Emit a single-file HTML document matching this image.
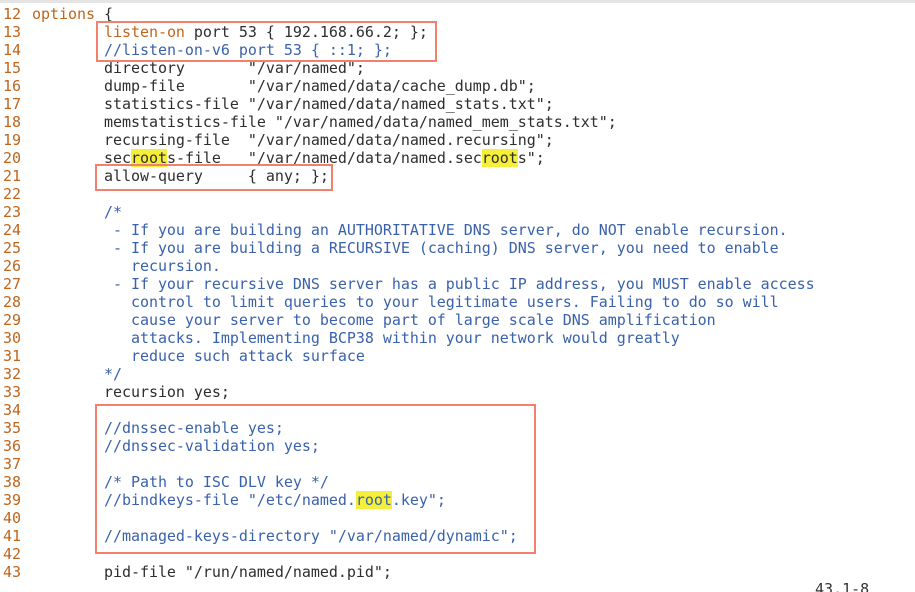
<!DOCTYPE html>
<html><head><meta charset="utf-8"><style>
html,body{margin:0;padding:0;background:#fff;width:915px;height:592px;overflow:hidden;position:relative}
.top{position:absolute;left:0;top:0;width:915px;height:3px;background:#e4e4e4}
pre{margin:0;position:absolute;font-family:"DejaVu Sans Mono","Liberation Mono",monospace;font-size:15px;line-height:18px;color:#2e2e2e;letter-spacing:-0.035px}
#num{left:3px;top:5px;color:#c0651c}
#code{left:32px;top:5px}
.o{color:#c0651c}.c{color:#3a62ab}
.h{background:#f5ef3a}
.box{position:absolute;border:2px solid #f2806c;box-sizing:border-box}
#st{position:absolute;left:815px;top:580px;font-family:"DejaVu Sans Mono",monospace;font-size:15px;color:#333}
</style></head><body>
<div class="top"></div>
<pre id="num">12
13
14
15
16
17
18
19
20
21
22
23
24
25
26
27
28
29
30
31
32
33
34
35
36
37
38
39
40
41
42
43</pre>
<pre id="code"><span class="o">options</span> {
        <span class="o">listen-on</span> port 53 { 192.168.66.2; };
        <span class="c">//listen-on-v6 port 53 { ::1; };</span>
        directory       "/var/named";
        dump-file       "/var/named/data/cache_dump.db";
        statistics-file "/var/named/data/named_stats.txt";
        memstatistics-file "/var/named/data/named_mem_stats.txt";
        recursing-file  "/var/named/data/named.recursing";
        sec<span class="h">root</span>s-file   "/var/named/data/named.sec<span class="h">root</span>s";
        allow-query     { any; };

<span class="c">        /*
         - If you are building an AUTHORITATIVE DNS server, do NOT enable recursion.
         - If you are building a RECURSIVE (caching) DNS server, you need to enable
           recursion.
         - If your recursive DNS server has a public IP address, you MUST enable access
           control to limit queries to your legitimate users. Failing to do so will
           cause your server to become part of large scale DNS amplification
           attacks. Implementing BCP38 within your network would greatly
           reduce such attack surface
        */</span>
        recursion yes;

<span class="c">        //dnssec-enable yes;
        //dnssec-validation yes;

        /* Path to ISC DLV key */
        //bindkeys-file "/etc/named.<span class="h">root</span>.key";

        //managed-keys-directory "/var/named/dynamic";</span>

        pid-file "/run/named/named.pid";</pre>
<div class="box" style="left:96px;top:21px;width:341px;height:41px"></div>
<div class="box" style="left:95px;top:164px;width:238px;height:27px"></div>
<div class="box" style="left:95px;top:404px;width:441px;height:150px"></div>
<div id="st">43,1-8</div>
</body></html>
